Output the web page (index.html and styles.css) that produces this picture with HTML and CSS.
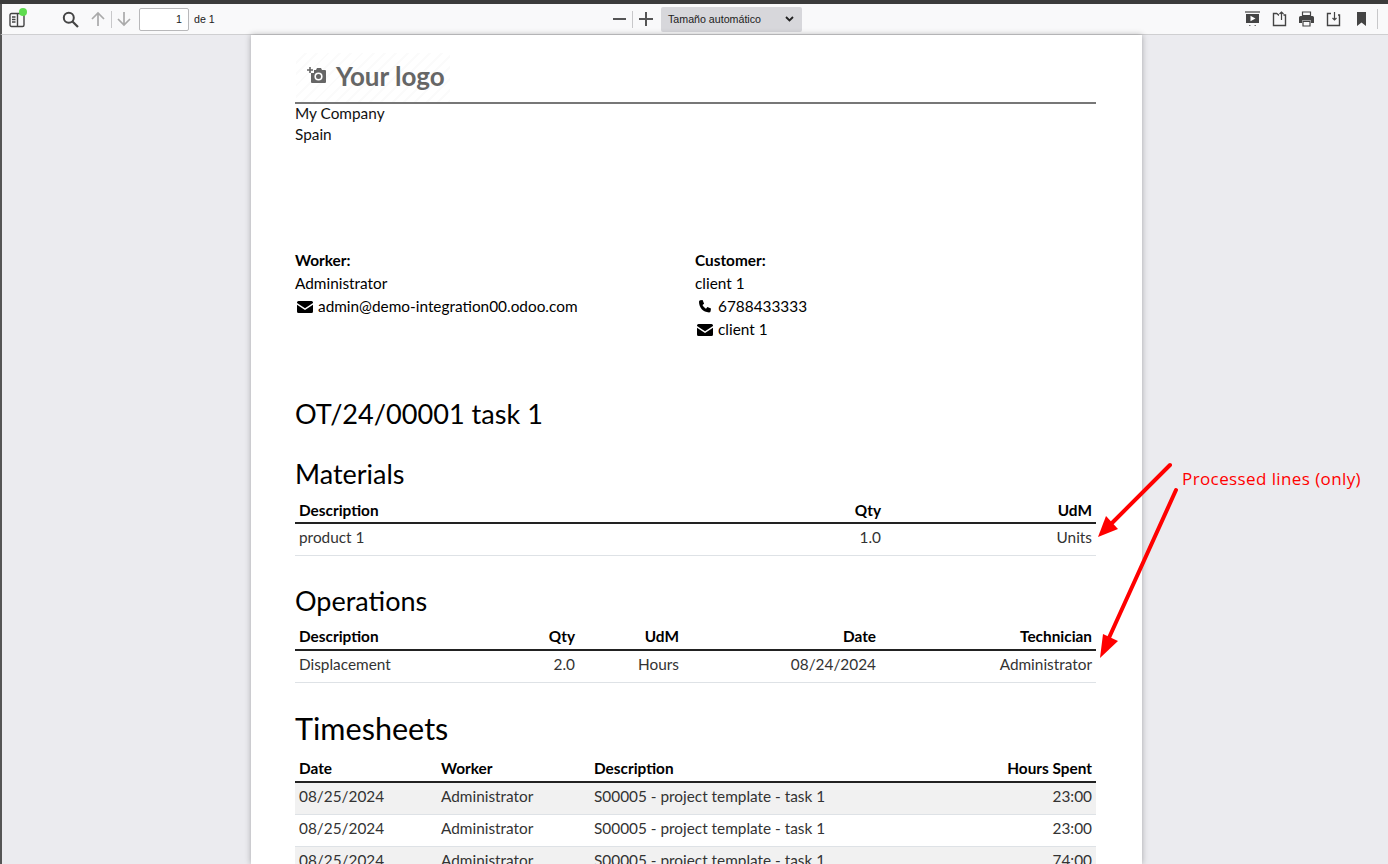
FILE: index.html
```html
<!DOCTYPE html>
<html lang="es">
<head>
  <meta charset="UTF-8" />
  <title>Worksheet</title>
  <link rel="stylesheet" href="styles.css">
</head>
<body>
  <div class="topline"></div>
  <div class="toolbar">
    <div class="sidebar-btn">
      <svg class="ico" width="16" height="16" viewBox="0 0 16 16"><path d="M2.500 1.500h11a1.500 1.500 0 0 1 1.500 1.500v10a1.500 1.500 0 0 1-1.500 1.500h-11A1.500 1.500 0 0 1 1 13V3a1.500 1.500 0 0 1 1.500-1.500zM8.500 2v12M3 5h3.500M3 7.500h3.500M3 10h3.500" fill="none" stroke="#444" stroke-width="1.400"/></svg>
      <span class="dot"></span>
    </div>
    <svg class="search" width="17" height="17" viewBox="0 0 17 17"><circle cx="6.800" cy="6.800" r="5" fill="none" stroke="#444" stroke-width="2"/><path d="M10.500 10.500l5.500 5.500" stroke="#444" stroke-width="2.200"/></svg>
    <svg class="arrow-up" width="14" height="16" viewBox="0 0 14 16"><path d="M7 15V2M1 8l6-6 6 6" fill="none" stroke="#aaa" stroke-width="1.700"/></svg>
    <span class="sep sep-nav"></span>
    <svg class="arrow-down" width="14" height="16" viewBox="0 0 14 16"><path d="M7 1v13M1 8l6 6 6-6" fill="none" stroke="#aaa" stroke-width="1.700"/></svg>
    <div class="page-input">1</div>
    <span class="page-total">de 1</span>
    <svg class="minus" width="13" height="2" viewBox="0 0 13 2"><path d="M0 1h13" stroke="#555" stroke-width="2"/></svg>
    <span class="sep sep-zoom"></span>
    <svg class="plus" width="14" height="14" viewBox="0 0 14 14"><path d="M0 7h14M7 0v14" stroke="#555" stroke-width="2"/></svg>
    <div class="zoom-select">
      <span>Tamaño automático</span>
      <svg width="9" height="6" viewBox="0 0 9 6"><path d="M1 1l3.500 3.500L8 1" fill="none" stroke="#222" stroke-width="1.800"/></svg>
    </div>
    <svg class="tool tool-first" width="15" height="16" viewBox="0 0 15 16"><path d="M0 1h15" stroke="#444" stroke-width="1.200"/><path d="M1 3h13v9H1z" fill="#444"/><path d="M5.500 4.800l5 2.700-5 2.700z" fill="#fff"/><path d="M4 14h1.500v1H4zM9.500 14H11v1H9.500z" fill="#777"/></svg>
    <svg class="tool" width="15" height="16" viewBox="0 0 15 16"><path d="M5 2.500l1.500 1.500H7M11.500 4h2v10.500h-12v-12H5" fill="none" stroke="#444" stroke-width="1.400"/><path d="M9.500 9V1M7.500 3l2-2 2 2" fill="none" stroke="#444" stroke-width="1.200"/></svg>
    <svg class="tool" width="15" height="16" viewBox="0 0 15 16"><path d="M3.500 1h8v3.500h-8z" fill="none" stroke="#444" stroke-width="1.200"/><path d="M1.500 5h12A1.500 1.500 0 0 1 15 6.500V12h-3V9.500H3V12H0V6.500A1.500 1.500 0 0 1 1.500 5z" fill="#444"/><path d="M4 10.500h7v4.500H4z" fill="none" stroke="#444" stroke-width="1.200"/></svg>
    <svg class="tool" width="15" height="16" viewBox="0 0 15 16"><path d="M5 2.500h-3.500v12h12V4H12" fill="none" stroke="#444" stroke-width="1.400"/><path d="M8.500 1v8M6.500 7l2 2 2-2" fill="none" stroke="#444" stroke-width="1.200"/></svg>
    <svg class="tool tool-mark" width="9" height="14" viewBox="0 0 9 14"><path d="M0 0h9v14L4.500 10.500 0 14z" fill="#444"/></svg>
    <span class="sep sep-end"></span>
  </div>

  <main class="viewer">
    <div class="page">
      <header class="letterhead">
        <div class="logo">
          <svg width="20" height="19" viewBox="0 0 20 19"><path d="M3 1v6M0 4h6" stroke="#666" stroke-width="1.600"/><path d="M7 4h2l1-2h4l1 2h3a1 1 0 0 1 1 1v11a1 1 0 0 1-1 1H5a1 1 0 0 1-1-1V7h3z" fill="#666"/><circle cx="11.500" cy="10.500" r="3.300" fill="none" stroke="#fff" stroke-width="1.600"/></svg>
          <span>Your logo</span>
        </div>
      </header>
      <div class="company">My Company<br>Spain</div>

      <section class="parties">
        <div class="party">
          <div class="party-title">Worker:</div>
          <div class="party-line">Administrator</div>
          <div class="party-line">
            <svg class="mail" width="16" height="12" viewBox="0 0 16 12"><path d="M1.500 0h13A1.500 1.500 0 0 1 16 1.500v.5L8 7.200 0 2v-.5A1.500 1.500 0 0 1 1.500 0zM0 3.800l8 5.200 8-5.200v6.700a1.500 1.500 0 0 1-1.500 1.500h-13A1.500 1.500 0 0 1 0 10.500z" fill="#000"/></svg>
            admin@demo-integration00.odoo.com
          </div>
        </div>
        <div class="party">
          <div class="party-title">Customer:</div>
          <div class="party-line">client 1</div>
          <div class="party-line">
            <svg class="mail" width="16" height="14" viewBox="0 0 16 14"><path d="M3.200.300L5.600 0l1.500 3.700-1.600 1.400c.8 1.600 2 2.800 3.500 3.600l1.400-1.600 3.600 1.500-.4 2.600c-.2.800-.8 1.200-1.500 1.200C6 12.300 2 7.500 2 1.800 2 1 2.400.500 3.200.300z" fill="#000"/></svg>
            6788433333
          </div>
          <div class="party-line">
            <svg class="mail" width="16" height="12" viewBox="0 0 16 12"><path d="M1.500 0h13A1.500 1.500 0 0 1 16 1.500v.5L8 7.200 0 2v-.5A1.500 1.500 0 0 1 1.500 0zM0 3.800l8 5.200 8-5.200v6.700a1.500 1.500 0 0 1-1.500 1.500h-13A1.500 1.500 0 0 1 0 10.500z" fill="#000"/></svg>
            client 1
          </div>
        </div>
      </section>

      <h2 class="doc-title">OT/24/00001 task 1</h2>

      <h3 class="section-title">Materials</h3>
      <table class="lines">
        <colgroup><col class="w-405"><col class="w-185"><col class="w-211"></colgroup>
        <thead><tr><th>Description</th><th class="num">Qty</th><th class="num">UdM</th></tr></thead>
        <tbody><tr><td>product 1</td><td class="num">1.0</td><td class="num">Units</td></tr></tbody>
      </table>

      <h3 class="section-title ops">Operations</h3>
      <table class="lines loose">
        <colgroup><col class="w-205"><col class="w-79"><col class="w-104"><col class="w-197"><col class="w-216"></colgroup>
        <thead><tr><th>Description</th><th class="num">Qty</th><th class="num">UdM</th><th class="num">Date</th><th class="num">Technician</th></tr></thead>
        <tbody><tr><td>Displacement</td><td class="num">2.0</td><td class="num">Hours</td><td class="num">08/24/2024</td><td class="num">Administrator</td></tr></tbody>
      </table>

      <h3 class="section-title big">Timesheets</h3>
      <table class="lines loose striped">
        <colgroup><col class="w-142"><col class="w-153"><col class="w-360"><col class="w-146"></colgroup>
        <thead><tr><th>Date</th><th>Worker</th><th>Description</th><th class="num">Hours Spent</th></tr></thead>
        <tbody>
          <tr><td>08/25/2024</td><td>Administrator</td><td>S00005 - project template - task 1</td><td class="num">23:00</td></tr>
          <tr><td>08/25/2024</td><td>Administrator</td><td>S00005 - project template - task 1</td><td class="num">23:00</td></tr>
          <tr><td>08/25/2024</td><td>Administrator</td><td>S00005 - project template - task 1</td><td class="num">74:00</td></tr>
        </tbody>
      </table>
    </div>
  </main>

  <svg class="annotation-arrows" width="1388" height="864" viewBox="0 0 1388 864">
    <path d="M1170 465L1112 523" stroke="#f00" stroke-width="4" stroke-linecap="round"/>
    <path d="M1098 537l8-21 12 13z" fill="#f00"/>
    <path d="M1176 490L1108 640" stroke="#f00" stroke-width="4" stroke-linecap="round"/>
    <path d="M1100 658l3-24 15 7z" fill="#f00"/>
  </svg>
  <div class="annotation-text">Processed lines (only)</div>
</body>
</html>
```
FILE: styles.css
```css
html, body {
  margin: 0;
  height: 100%;
  overflow: hidden;
}
body {
  display: flex;
  flex-direction: column;
  background: #ebebef;
  font-family: "Lato", sans-serif;
  color: #000;
}
.topline {
  height: 4px;
  background: #3b3b3b;
  flex: none;
}

/* pdf viewer toolbar */
.toolbar {
  height: 30px;
  flex: none;
  display: flex;
  align-items: center;
  background: #f9f9fa;
  border-bottom: 1px solid #cfcfd1;
  border-left: 2px solid #555;
  font-family: "Liberation Sans", sans-serif;
  font-size: 10.67px;
  color: #222;
}
.toolbar svg { flex: none; }
.sidebar-btn {
  position: relative;
  display: flex;
  margin: 2px 0 0 7px;
}
.dot {
  position: absolute;
  top: -4px;
  right: -2px;
  width: 8px;
  height: 8px;
  border-radius: 50%;
  background: #5fdc4f;
}
.search { margin-left: 37px; }
.arrow-up { margin-left: 12px; }
.sep {
  width: 1px;
  height: 17px;
  background: #c8c8ca;
  flex: none;
}
.sep-nav { margin: 0 5px 0 6px; }
.page-input {
  width: 42px;
  height: 21px;
  margin-left: 8px;
  padding-right: 6px;
  background: #fff;
  border: 1px solid #b8b8ba;
  border-radius: 2px;
  text-align: right;
  line-height: 21px;
}
.page-total {
  margin-left: 5px;
  width: 20px;
  white-space: nowrap;
}
.minus { margin-left: 399px; }
.sep-zoom { margin: 0 6px; }
.zoom-select {
  width: 141px;
  height: 25px;
  margin-left: 8px;
  padding: 0 8px 0 7px;
  box-sizing: border-box;
  display: flex;
  align-items: center;
  justify-content: space-between;
  background: #d7d7db;
  border-radius: 2px;
}
.tool { margin-left: 12px; }
.tool-first { margin-left: 443px; }
.tool-mark { margin-left: 16px; }
.sep-end { margin-left: 11px; height: 20px; }

/* document page */
.viewer {
  flex: 1;
  min-height: 0;
  display: flex;
  border-left: 2px solid #555;
}
.page {
  width: 891px;
  height: 100%;
  margin-left: 249px;
  padding: 0 46px 0 44px;
  box-sizing: border-box;
  background: #fff;
  box-shadow: 0 0 6px rgba(0, 0, 0, 0.3);
  font-size: 15.36px;
}
.letterhead {
  height: 67px;
  display: flex;
  align-items: flex-end;
  border-bottom: 2px solid #777;
}
.logo {
  width: 154px;
  height: 49px;
  margin: 0 0 0 1px;
  padding: 0 0 4px 11px;
  display: flex;
  align-items: center;
  gap: 9px;
  box-sizing: border-box;
  background: repeating-linear-gradient(135deg, #fff 0 6px, #fbfbfb 6px 8px);
  color: #666;
  font-size: 26px;
  font-weight: 700;
}
.company {
  line-height: 21px;
  margin-top: -1px;
  color: #111;
}
.parties {
  display: flex;
  margin-top: 104px;
}
.party { width: 400px; }
.party-title {
  font-weight: 700;
  line-height: 23px;
}
.party-line {
  line-height: 23px;
  display: flex;
  align-items: center;
}
.mail { margin: 0 5px 0 2px; flex: none; }
.doc-title {
  margin: 55px 0 0;
  font-size: 27.1px;
  font-weight: 400;
  line-height: 36px;
}
.section-title {
  margin: 24px 0 3px;
  font-size: 27px;
  font-weight: 400;
  line-height: 36px;
}
.section-title.ops { margin: 27px 0 2px; }
.section-title.big {
  margin: 28px 0 6px;
  font-size: 30.6px;
}
.lines {
  width: 801px;
  table-layout: fixed;
  border-collapse: collapse;
  font-size: 15.36px;
}
.lines th {
  padding: 4px 4px 1px;
  line-height: 22px;
  font-weight: 700;
  text-align: left;
  border-bottom: 2px solid #222;
}
.loose th { padding-bottom: 2px; }
.lines td {
  padding: 2px 4px 6px;
  line-height: 23px;
  color: #333;
  border-bottom: 1px solid #dee2e6;
}
.lines .num { text-align: right; }
.striped tbody tr:nth-child(odd) td { background: #f1f1f1; }

.w-405 { width: 405px; }
.w-185 { width: 185px; }
.w-211 { width: 211px; }
.w-205 { width: 205px; }
.w-79 { width: 79px; }
.w-104 { width: 104px; }
.w-197 { width: 197px; }
.w-216 { width: 216px; }
.w-142 { width: 142px; }
.w-153 { width: 153px; }
.w-360 { width: 360px; }
.w-146 { width: 146px; }

/* red notes drawn over the screenshot */
.annotation-arrows {
  position: absolute;
  left: 0;
  top: 0;
  pointer-events: none;
}
.annotation-text {
  position: absolute;
  left: 1182px;
  top: 468px;
  font-family: "Open Sans", sans-serif;
  font-size: 17px;
  letter-spacing: 0.4px;
  line-height: 22px;
  color: #f00;
}
```
